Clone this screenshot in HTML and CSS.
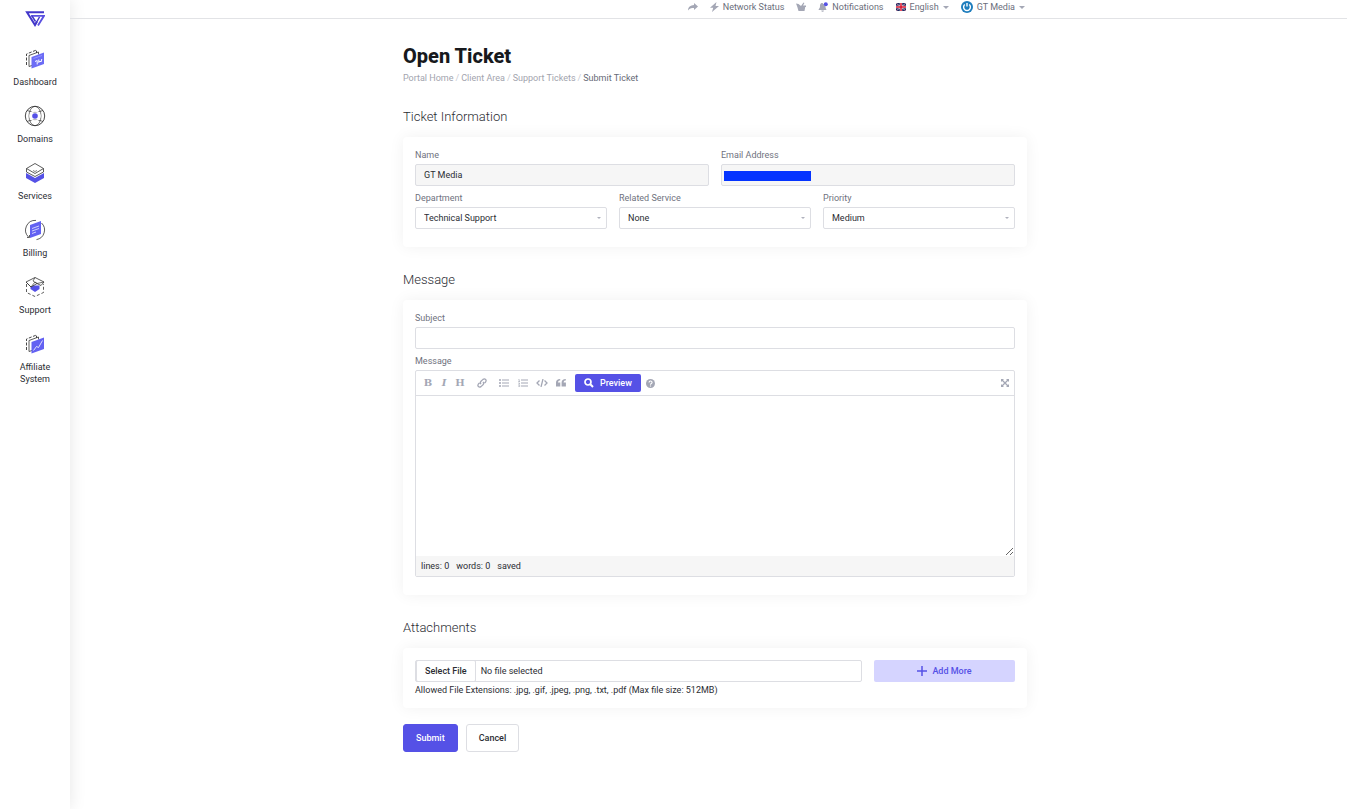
FILE: index.html
```html
<!DOCTYPE html>
<html lang="en">

<head>
    <meta charset="UTF-8">
    <title>Open Ticket</title>
    <link rel="stylesheet" href="styles.css">
</head>

<body>
    <aside class="sidebar">
        <a href="#" class="logo" aria-label="Home">
            <svg width="20" height="16" viewBox="0 0 20 16" fill="none" stroke="#4338ca" stroke-width="2">
                <path d="M19 1.200H2L10 14l2-3.500" />
                <path d="M6 4.800h13L13 14.500" stroke="#5a50e0" stroke-width="1.800" />
                <path d="M7 5l3.500 5.500M14.500 6l-4.500 8" stroke="#4338ca" stroke-width="1.500" />
            </svg>
        </a>
        <nav>
            <a href="#" class="menu-item">
                <svg width="22" height="22" viewBox="0 0 22 22" fill="none" stroke="#333">
                    <path d="M2.500 17V6l10-4v3" stroke-dasharray="3 1.500" stroke-width=".9" />
                    <path d="M5 18.500V7.500L14.500 4v2.500M5 18.500l3-1" stroke-width=".8" />
                    <path d="M7.500 9L20 4.500v11.500L7.500 20.500z" fill="#6c6cf5" stroke="none" />
                    <path d="M9.500 10.500l8.500-3" stroke="#a5a5ff" stroke-width=".7" />
                    <path d="M11 13.500l2.200-1v4M14.800 11.500v3l1.200-1.500 1 1 .8-3" stroke="#fff" />
                </svg>
                <span>Dashboard</span>
            </a>
            <a href="#" class="menu-item">
                <svg width="22" height="22" viewBox="0 0 22 22" fill="none" stroke="#333" stroke-width=".9">
                    <circle cx="11" cy="11" r="9.700" />
                    <ellipse cx="11" cy="11" rx="6" ry="9.700" stroke-width=".7" />
                    <path d="M3 5.500c5 2 11 2 16 0M3 16.500c5-2 11-2 16 0" stroke-width=".7" />
                    <circle cx="11" cy="11" r="5" stroke="#fff" stroke-width="1.500" />
                    <circle cx="11" cy="11" r="2.800" fill="#5551e6" stroke="none" />
                </svg>
                <span>Domains</span>
            </a>
            <a href="#" class="menu-item">
                <svg width="22" height="22" viewBox="0 0 22 22" fill="none" stroke="#333">
                    <path d="M2 11l9 5 9-5v5l-9 5-9-5z" fill="#5551e6" stroke="none" />
                    <path d="M2.500 6.500v3.500l8.500 4.500 8.500-4.500V6.500" fill="#fff" stroke-width=".8" />
                    <path d="M2.500 6.500L11 1.500l8.500 5-8.500 5z" fill="#fff" stroke-width=".8" />
                    <path d="M9 8.500l2 1 2-1" stroke-width=".6" />
                </svg>
                <span>Services</span>
            </a>
            <a href="#" class="menu-item">
                <svg width="22" height="22" viewBox="0 0 22 22" fill="none" stroke="#333" stroke-width=".8">
                    <path d="M4.500 18A9.700 9.700 0 0 1 12 1.400M17.500 4A9.700 9.700 0 0 1 12.500 20.600" />
                    <path d="M3 18.500h2.500V16" />
                    <path d="M6 6l11-4v13L6 19z" fill="#6361f2" stroke="none" />
                    <path d="M8 9.500l7-2.500M8 12l7-2.500M8 14.500l4-1.500" stroke="#fff" stroke-width=".7" />
                </svg>
                <span>Billing</span>
            </a>
            <a href="#" class="menu-item">
                <svg width="22" height="22" viewBox="0 0 22 22" fill="none" stroke="#333" stroke-width=".8">
                    <path d="M2.500 8v8.500l8.500 4 8.500-4V8" stroke-dasharray="3 2" />
                    <path d="M6.500 9.500h9V13L11 16l-4.500-3z" fill="#5551e6" stroke="none" />
                    <path d="M2 6l9-4.500L20 6l-3 3.500-4-2-6 3.500z" fill="#fff" />
                    <path d="M2 6l5 5 4-5 2 1.500M11 1.500L9 5l4 2.500 7-1.500" stroke-width=".7" />
                </svg>
                <span>Support</span>
            </a>
            <a href="#" class="menu-item">
                <svg width="22" height="22" viewBox="0 0 22 22" fill="none" stroke="#333">
                    <path d="M2.500 17V6l10-4v3" stroke-dasharray="3 1.500" stroke-width=".9" />
                    <path d="M5 18.500V7.500L14.500 4v2.500M5 18.500l3-1" stroke-width=".8" />
                    <path d="M7.500 9L20 4.500v11.500L7.500 20.500z" fill="#6361f2" stroke="none" />
                    <path d="M9.500 17.500l3-4 2 1 4-7" stroke="#fff" stroke-width=".8" />
                </svg>
                <span>Affiliate System</span>
            </a>
        </nav>
    </aside>

    <div class="main">
        <header class="topbar">
            <div class="container top-nav">
                <a href="#" aria-label="Share">
                    <svg width="10" height="10" viewBox="0 0 10 10" fill="#a4a7b5">
                        <path d="M6 1l4 3.500L6 8V6C3 6 1.500 6.500 0 8.500 0 5 2.500 3.200 6 3z" />
                    </svg>
                </a>
                <a href="#">
                    <svg width="9" height="10" viewBox="0 0 9 10" fill="#a4a7b5">
                        <path d="M6.500 0L0 5.800h3.200L2 10l7-6H5.500z" />
                    </svg>
                    <span>Network Status</span>
                </a>
                <a href="#" aria-label="Cart">
                    <svg width="10" height="10" viewBox="0 0 10 10" fill="#a4a7b5">
                        <path d="M0 1.500l2.500.5L5 4l2.500-3.500.9.600L7 3.500h3V5H9.200L8.500 9h-6L1.200 4.500z" />
                    </svg>
                </a>
                <a href="#">
                    <svg width="10" height="10" viewBox="0 0 10 10" fill="#a4a7b5">
                        <path d="M4.500 1C2 1 2 3 2 4.500S1 6.500.5 8h8C8 6.500 7.500 6 7.500 4.500zM3.300 8.500h2.600a1.300 1.300 0 0 1-2.600 0z" />
                        <circle cx="7.800" cy="2.200" r="2" fill="#5551e6" />
                    </svg>
                    <span>Notifications</span>
                </a>
                <a href="#">
                    <svg width="10" height="8" viewBox="0 0 10 8">
                        <rect width="10" height="8" fill="#1c2a62" />
                        <path d="M0 0l10 8M10 0L0 8" stroke="#d9a0b4" stroke-width=".9" />
                        <path d="M5 0v8M0 4h10" stroke="#fff" stroke-width="2.400" />
                        <path d="M5 0v8M0 4h10" stroke="#d8142f" stroke-width="1.500" />
                    </svg>
                    <span>English</span>
                    <i class="caret"></i>
                </a>
                <a href="#" class="user">
                    <svg width="12" height="12" viewBox="0 0 12 12" fill="none">
                        <circle cx="6" cy="6" r="6" fill="#1e7dbd" />
                        <path d="M3.800 3.500a3.400 3.400 0 1 0 4.400 0M6 2v3.500" stroke="#fff" stroke-width="1.400" />
                    </svg>
                    <span>GT Media</span>
                    <i class="caret"></i>
                </a>
            </div>
        </header>

        <form class="container content">
            <h1>Open Ticket</h1>
            <nav class="breadcrumb">
                <a href="#">Portal Home</a><i>/</i>
                <a href="#">Client Area</a><i>/</i>
                <a href="#">Support Tickets</a><i>/</i>
                <span>Submit Ticket</span>
            </nav>

            <h2>Ticket Information</h2>
            <div class="card">
                <div class="row">
                    <div class="form-group">
                        <label for="name">Name</label>
                        <input type="text" id="name" value="GT Media" readonly>
                    </div>
                    <div class="form-group">
                        <label for="email">Email Address</label>
                        <input type="email" id="email" class="redacted" readonly>
                    </div>
                </div>
                <div class="row">
                    <div class="form-group">
                        <label for="department">Department</label>
                        <div class="select-wrap">
                            <select id="department">
                                <option>Technical Support</option>
                            </select>
                        </div>
                    </div>
                    <div class="form-group">
                        <label for="service">Related Service</label>
                        <div class="select-wrap">
                            <select id="service">
                                <option>None</option>
                            </select>
                        </div>
                    </div>
                    <div class="form-group">
                        <label for="priority">Priority</label>
                        <div class="select-wrap">
                            <select id="priority">
                                <option>High</option>
                                <option selected>Medium</option>
                                <option>Low</option>
                            </select>
                        </div>
                    </div>
                </div>
            </div>

            <h2>Message</h2>
            <div class="card">
                <div class="form-group">
                    <label for="subject">Subject</label>
                    <input type="text" id="subject">
                </div>
                <div class="form-group">
                    <label for="message">Message</label>
                    <div class="editor">
                        <div class="toolbar">
                            <div class="tools letters">
                                <button type="button" class="tool">B</button>
                                <button type="button" class="tool italic">I</button>
                                <button type="button" class="tool">H</button>
                            </div>
                            <div class="tools">
                                <button type="button" class="tool" aria-label="Link">
                                    <svg width="10" height="10" viewBox="0 0 10 10" fill="none" stroke="#a4a7b5" stroke-width="1.300">
                                        <path d="M4 6.200C3 5 3.300 4 4 3.300L6 1.400C8 0 10 2 8.600 4L7.500 5.100M6 3.800C7 5 6.700 6 6 6.700L4 8.600C2 10 0 8 1.400 6l1.100-1.100" />
                                    </svg>
                                </button>
                            </div>
                            <div class="tools">
                                <button type="button" class="tool" aria-label="Bullet list">
                                    <svg width="10" height="8" viewBox="0 0 10 8" fill="none" stroke="#a4a7b5">
                                        <path d="M0 1h2M0 4h2M0 7h2" stroke-width="1.600" />
                                        <path d="M3 1h7M3 4h7M3 7h7" />
                                    </svg>
                                </button>
                                <button type="button" class="tool" aria-label="Numbered list">
                                    <svg width="10" height="8" viewBox="0 0 10 8" fill="none" stroke="#a4a7b5">
                                        <path d="M.5.500h.7v2M.3 2.500h1.700M.3 4h1.200v1.200H.5M.3 6.200h1.400v1.500H.3" stroke-width=".7" />
                                        <path d="M3 1h7M3 4h7M3 7h7" />
                                    </svg>
                                </button>
                                <button type="button" class="tool" aria-label="Code">
                                    <svg width="12" height="8" viewBox="0 0 12 8" fill="none" stroke="#a4a7b5" stroke-width="1.300">
                                        <path d="M3.500 1.500L1 4l2.500 2.500M8.500 1.500L11 4 8.500 6.500M7 0L5 8" />
                                    </svg>
                                </button>
                                <button type="button" class="tool" aria-label="Quote">
                                    <svg width="10" height="8" viewBox="0 0 10 8" fill="#a4a7b5">
                                        <path d="M4.200 0v1.400C2.800 1.400 2 2 2 3.500h2.300v4H0V3.500C0 1.200 1.500 0 4.200 0zM9.800 0v1.400C8.400 1.400 7.600 2 7.600 3.500h2.300v4H5.600V3.500C5.600 1.200 7.100 0 9.800 0z" />
                                    </svg>
                                </button>
                            </div>
                            <button type="button" class="preview">
                                <svg width="10" height="10" viewBox="0 0 10 10" fill="none" stroke="#fff">
                                    <circle cx="4" cy="4" r="3" stroke-width="1.700" />
                                    <path d="M6.300 6.300L9 9" stroke-width="2" />
                                </svg>
                                Preview
                            </button>
                            <button type="button" class="tool" aria-label="Help">
                                <svg width="9" height="9" viewBox="0 0 8 8" fill="none">
                                    <circle cx="4" cy="4" r="4" fill="#a4a7b5" />
                                    <path d="M2.700 3c0-1.600 2.700-1.600 2.700 0C5.400 4 4 3.900 4 5M4 5.700v1" stroke="#fff" />
                                </svg>
                            </button>
                            <button type="button" class="tool expand" aria-label="Fullscreen">
                                <svg width="8" height="8" viewBox="0 0 8 8" fill="#a4a7b5" stroke="#a4a7b5">
                                    <path d="M1 1l6 6M7 1L1 7" stroke-width="1.300" />
                                    <path d="M0 0h3L0 3zM8 0v3L5 0zM0 8V5l3 3zM8 8H5l3-3z" stroke="none" />
                                </svg>
                            </button>
                        </div>
                        <textarea id="message"></textarea>
                        <div class="status">
                            <span>lines: 0</span>
                            <span>words: 0</span>
                            <span>saved</span>
                        </div>
                    </div>
                </div>
            </div>

            <h2>Attachments</h2>
            <div class="card">
                <div class="attach">
                    <label class="file" for="attachment">
                        <input type="file" id="attachment">
                        <span class="file-btn">Select File</span>
                        <span>No file selected</span>
                    </label>
                    <button type="button" class="add-more">
                        <svg width="10" height="10" viewBox="0 0 10 10" stroke="#5551e6" stroke-width="1.500">
                            <path d="M5 0v10M0 5h10" />
                        </svg>
                        Add More
                    </button>
                </div>
                <p class="hint">Allowed File Extensions: .jpg, .gif, .jpeg, .png, .txt, .pdf (Max file size: 512MB)</p>
            </div>

            <div class="actions">
                <button type="submit" class="btn btn-primary">Submit</button>
                <button type="button" class="btn">Cancel</button>
            </div>
        </form>
    </div>
</body>

</html>
```

FILE: styles.css
```css
* {
    box-sizing: border-box;
}

body {
    margin: 0;
    display: flex;
    min-height: 100vh;
    background: #fff;
    color: #2b2d33;
    font-family: Roboto, "Liberation Sans", sans-serif;
    font-size: 9px;
    line-height: 12px;
}

a {
    color: inherit;
    text-decoration: none;
}

button,
input,
select,
textarea {
    font: inherit;
    color: inherit;
}

button {
    cursor: pointer;
}

svg {
    display: block;
    flex-shrink: 0;
}

/* sidebar */
.sidebar {
    width: 70px;
    flex-shrink: 0;
    padding-top: 11px;
    box-shadow: 0 0 16px rgba(0, 0, 0, 0.1);
}

.logo {
    display: flex;
    justify-content: center;
    margin-bottom: 21px;
}

.menu-item {
    display: flex;
    flex-direction: column;
    align-items: center;
    gap: 6px;
    margin-bottom: 17px;
    padding: 0 12px;
    text-align: center;
}

/* top bar */
.main {
    flex: 1;
}

.container {
    max-width: 637px;
    margin: 0 auto;
    padding-left: 13px;
}

.topbar {
    height: 19px;
    border-bottom: 1px solid #e2e3e6;
    color: #6b6e7b;
}

.top-nav {
    display: flex;
    justify-content: flex-end;
    gap: 12px;
    padding-top: 1px;
    padding-right: 2px;
}

.top-nav a {
    display: flex;
    align-items: center;
    height: 12px;
    gap: 4px;
}

.caret {
    border: 3px solid transparent;
    border-top-color: #a4a7b5;
    border-bottom: 0;
}

/* content */
.content {
    padding-top: 25px;
}

h1 {
    margin: 0 0 4px;
    font-size: 20px;
    line-height: 24px;
    font-weight: 800;
    color: #17191d;
}

.breadcrumb {
    display: flex;
    gap: 2px;
    color: #a2a4ae;
}

.breadcrumb i {
    font-style: normal;
    color: #c9cbd2;
}

.breadcrumb span {
    color: #666a76;
}

h2 {
    margin: 23px 0 10px;
    font-size: 13px;
    line-height: 20px;
    font-weight: 300;
}

.card {
    padding: 12px;
    border-radius: 4px;
    background: #fff;
    box-shadow: 0 0 16px rgba(0, 0, 0, 0.06);
}

.row {
    display: flex;
    gap: 12px;
}

.form-group {
    flex: 1;
    margin-bottom: 6px;
}

.form-group label {
    display: block;
    margin-bottom: 3px;
    color: #6f727e;
}

input[type="text"],
input[type="email"],
select {
    display: block;
    width: 100%;
    height: 22px;
    padding: 0 8px;
    border: 1px solid #dddee3;
    border-radius: 2px;
    background: #fff;
}

input[readonly] {
    background-color: #f6f6f6;
}

input.redacted {
    background-image: linear-gradient(#0433ff, #0433ff);
    background-repeat: no-repeat;
    background-size: 87px 10px;
    background-position: 2px 6px;
}

select {
    appearance: none;
}

.select-wrap {
    position: relative;
}

.select-wrap::after {
    content: "";
    position: absolute;
    right: 6px;
    top: 10px;
    border: 2px solid transparent;
    border-top-color: #b0b2bd;
    border-bottom: 0;
    pointer-events: none;
}

/* editor */
.editor {
    border: 1px solid #dddee3;
    border-radius: 2px;
}

.toolbar {
    display: flex;
    align-items: center;
    height: 25px;
    padding: 0 4px;
    border-bottom: 1px solid #dddee3;
}

.tools {
    display: flex;
    gap: 3px;
    margin-right: 6px;
}

.tool {
    display: flex;
    align-items: center;
    justify-content: center;
    min-width: 16px;
    height: 18px;
    padding: 0;
    border: 0;
    background: none;
    color: #a4a7b5;
}

.letters {
    gap: 0;
}

.letters .tool {
    font-family: "DejaVu Serif", serif;
    font-size: 10px;
    font-weight: 700;
}

.letters .italic {
    font-style: italic;
}

.preview {
    display: flex;
    align-items: center;
    gap: 6px;
    height: 18px;
    margin-right: 2px;
    padding: 0 9px;
    border: 0;
    border-radius: 2px;
    background: #5551e6;
    color: #fff;
    font-weight: 500;
}

.expand {
    margin-left: auto;
    margin-right: -3px;
}

textarea {
    display: block;
    width: 100%;
    height: 160px;
    padding: 6px;
    border: 0;
    background: #fff;
    resize: vertical;
}

.status {
    display: flex;
    gap: 7px;
    padding: 4px 5px;
    background: #f6f6f6;
}

/* attachments */
.attach {
    display: flex;
    gap: 12px;
}

.file {
    position: relative;
    flex: 1;
    display: flex;
    align-items: center;
    gap: 5px;
    height: 22px;
    border: 1px solid #dddee3;
    border-radius: 2px;
}

.file input {
    position: absolute;
    width: 100%;
    height: 100%;
    opacity: 0;
}

.file-btn {
    height: 22px;
    padding: 4px 8px;
    border: 1px solid #dddee3;
    border-radius: 2px;
    font-weight: 500;
}

.add-more {
    display: flex;
    align-items: center;
    justify-content: center;
    gap: 5px;
    width: 141px;
    height: 22px;
    border: 0;
    border-radius: 2px;
    background: #d5d4ff;
    color: #5551e6;
    font-weight: 500;
}

.hint {
    margin: 2px 0 0;
}

.actions {
    display: flex;
    gap: 8px;
    margin-top: 16px;
}

.btn {
    height: 28px;
    padding: 0 12px;
    border: 1px solid #dddee3;
    border-radius: 3px;
    background: #fff;
    font-weight: 500;
}

.btn-primary {
    border-color: #5551e6;
    background: #5551e6;
    color: #fff;
}
```
